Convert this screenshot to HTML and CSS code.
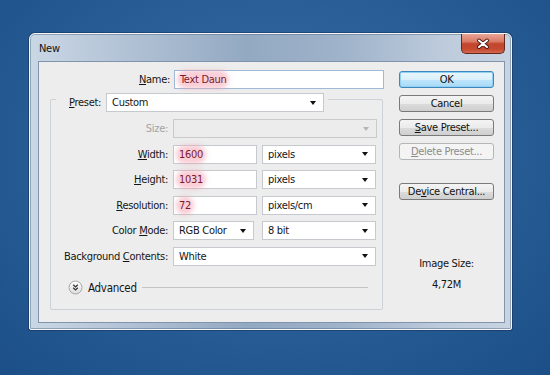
FILE: index.html
```html
<!DOCTYPE html>
<html lang="en">
<head>
  <meta charset="UTF-8">
  <title>New</title>
  <link rel="stylesheet" href="styles.css">
</head>
<body>

<div class="window">
  <div class="titlebar">
    <span class="title">New</span>
    <div class="close">
      <svg width="42" height="19" viewBox="0 0 42 19">
        <path d="M17 6.5 L25 13 M25 6.5 L17 13" stroke="#4a1c14" stroke-width="4" stroke-linecap="round"/>
        <path d="M17 6.5 L25 13 M25 6.5 L17 13" stroke="#fff" stroke-width="2" stroke-linecap="round"/>
      </svg>
    </div>
  </div>

  <div class="client">
    <div class="form">
      <div class="row">
        <label class="lbl name-lbl"><u>N</u>ame:</label>
        <div class="field text focus w-name"><span class="hl">Text Daun</span></div>
      </div>

      <div class="group">
        <div class="legend">
          <label><u>P</u>reset:</label>
          <div class="field select w-preset"><span>Custom</span><i class="arrow"></i></div>
        </div>

        <div class="row first disabled">
          <label class="lbl">Size:</label>
          <div class="field select w-full"><span></span><i class="arrow"></i></div>
        </div>
        <div class="row">
          <label class="lbl"><u>W</u>idth:</label>
          <div class="field text w-num"><span class="hl">1600</span></div>
          <div class="field select w-unit gap"><span>pixels</span><i class="arrow"></i></div>
        </div>
        <div class="row">
          <label class="lbl"><u>H</u>eight:</label>
          <div class="field text w-num"><span class="hl">1031</span></div>
          <div class="field select w-unit gap"><span>pixels</span><i class="arrow"></i></div>
        </div>
        <div class="row">
          <label class="lbl"><u>R</u>esolution:</label>
          <div class="field text w-num"><span class="hl">72</span></div>
          <div class="field select w-unit gap"><span>pixels/cm</span><i class="arrow"></i></div>
        </div>
        <div class="row">
          <label class="lbl">Color <u>M</u>ode:</label>
          <div class="field select w-mode"><span>RGB Color</span><i class="arrow"></i></div>
          <div class="field select w-unit gap-wide"><span>8 bit</span><i class="arrow"></i></div>
        </div>
        <div class="row">
          <label class="lbl">Background <u>C</u>ontents:</label>
          <div class="field select w-bg"><span>White</span><i class="arrow"></i></div>
        </div>

        <div class="advanced">
          <svg width="15" height="15" viewBox="0 0 15 15">
            <defs>
              <linearGradient id="adv" x1="0" y1="0" x2="0" y2="1">
                <stop offset="0" stop-color="#ffffff"/>
                <stop offset="1" stop-color="#dcdcdc"/>
              </linearGradient>
            </defs>
            <circle cx="7.5" cy="7.5" r="6.5" fill="url(#adv)" stroke="#a9a9a9"/>
            <path d="M5.2 4.8 L7.5 6.9 L9.8 4.8 M5.2 7.8 L7.5 9.9 L9.8 7.8" fill="none" stroke="#333" stroke-width="1.3"/>
          </svg>
          <span>Advanced</span>
          <div class="rule"></div>
        </div>
      </div>
    </div>

    <div class="side">
      <div class="btn default">OK</div>
      <div class="btn">Cancel</div>
      <div class="btn"><u>S</u>ave Preset...</div>
      <div class="btn off"><u>D</u>elete Preset...</div>
      <div class="btn spaced">De<u>v</u>ice Central...</div>
      <div class="image-size">
        <div>Image Size:</div>
        <div>4,72M</div>
      </div>
    </div>
  </div>
</div>

</body>
</html>
```

FILE: styles.css
```css
body {
  margin: 0;
  width: 550px;
  height: 375px;
  box-sizing: border-box;
  padding: 33px 0 0 29px;
  overflow: hidden;
  background: radial-gradient(ellipse 75% 85% at 50% 40%, #3369a0 0%, #2a5f97 45%, #1b4e86 100%);
  font-family: "DejaVu Sans Condensed", "DejaVu Sans", sans-serif;
  font-stretch: condensed;
  font-size: 11px;
  letter-spacing: -0.3px;
  color: #151515;
}
u {
  text-decoration: underline;
  text-underline-offset: 1px;
}
.window {
  width: 483px;
  height: 297px;
  box-sizing: border-box;
  display: flex;
  flex-direction: column;
  border: 1px solid #f4f6f9;
  border-radius: 6px 6px 2px 2px;
  background: linear-gradient(90deg, #cad7e5 0%, #b2c2d5 20%, #93a9c2 45%, #9fb3ca 65%, #bccadb 85%, #c8d4e2 100%);
  box-shadow: 0 0 0 1px rgba(10,30,60,0.35), inset 0 0 0 1px rgba(80,100,125,0.45);
}
.titlebar {
  height: 27px;
  display: flex;
  justify-content: space-between;
  align-items: flex-start;
  padding-left: 9px;
}
.title {
  line-height: 29px;
  color: #111;
}
.close {
  width: 42px;
  height: 19px;
  margin-right: 6px;
  border: 1px solid #62281e;
  border-top: none;
  border-radius: 0 0 5px 5px;
  background: linear-gradient(#e8a597 0%, #da7a66 40%, #c2452d 52%, #c54a30 80%, #d46a50 100%);
  display: flex;
  align-items: center;
  justify-content: center;
}
.close svg {
  display: block;
}
.client {
  flex: 1;
  display: flex;
  margin: 0 6px 6px 8px;
  padding: 8px 10px 0 0;
  border: 1px solid #8194ab;
  background: #ededed;
}
.form {
  width: 345px;
}
.row {
  display: flex;
  align-items: center;
  height: 19px;
  margin-top: 6.5px;
}
.form > .row {
  margin-top: 0;
}
.lbl {
  width: 117px;
  margin-right: 5px;
  text-align: right;
  white-space: nowrap;
}
.name-lbl {
  width: 131px;
  margin-right: 4px;
}
.disabled .lbl {
  color: #a3a3a3;
}
.field {
  height: 19px;
  box-sizing: border-box;
  display: flex;
  align-items: center;
  padding: 0 7px 0 5px;
  background: #fff;
  border: 1px solid #c6cacf;
}
.field.text.focus {
  border-color: #9fbad6;
}
.select {
  justify-content: space-between;
}
.disabled .field {
  background: #ececec;
  border-color: #cacaca;
}
.disabled .arrow {
  border-top-color: #b5b5b5;
}
.arrow {
  width: 0;
  height: 0;
  border-left: 3.5px solid transparent;
  border-right: 3.5px solid transparent;
  border-top: 4px solid #111;
}
.hl {
  color: #7c1a2c;
  background: rgba(246, 160, 178, 0.5);
  box-shadow: 0 0 4px 3px rgba(246, 160, 178, 0.5);
  border-radius: 6px;
}
.w-name { width: 210px; }
.w-preset { width: 218px; }
.w-full { width: 204px; }
.w-num { width: 84px; }
.w-unit { width: 114px; }
.w-mode { width: 81px; }
.w-bg { width: 203px; }
.gap { margin-left: 5px; }
.gap-wide { margin-left: 8px; }
.group {
  width: 333px;
  box-sizing: border-box;
  margin: 10px 0 0 11px;
  padding-bottom: 13px;
  border: 1px solid #cdd2d8;
  border-radius: 2px;
}
.legend {
  width: fit-content;
  display: flex;
  align-items: center;
  gap: 5px;
  margin: -7px 0 0 5px;
  padding: 0 4px 0 13px;
  background: #ededed;
}
.row.first {
  margin-top: 7px;
}
.advanced {
  height: 16px;
  display: flex;
  align-items: center;
  gap: 5px;
  margin-top: 14px;
  padding: 0 14px 0 17px;
}
.advanced span {
  font-size: 11.5px;
}
.advanced svg {
  display: block;
}
.rule {
  flex: 1;
  height: 1px;
  background: #c4c4c4;
}
.side {
  width: 95px;
  margin-left: 15px;
  padding-top: 1px;
  display: flex;
  flex-direction: column;
}
.btn {
  height: 17px;
  box-sizing: border-box;
  margin-bottom: 7px;
  border: 1px solid #7a7a7a;
  border-radius: 3px;
  background: linear-gradient(#f4f4f4 0%, #ebebeb 50%, #dcdcdc 51%, #cfcfcf 100%);
  text-align: center;
  line-height: 15px;
  color: #111;
}
.btn.default {
  border-color: #3c87bd;
  background: linear-gradient(#eaf6fd 0%, #d9f0fc 50%, #bee6fd 51%, #a7d9f5 100%);
  box-shadow: inset 0 0 0 1px #8fd0f3;
}
.btn.off {
  border-color: #b3b6b9;
  background: #f4f4f4;
  color: #8b8b8b;
}
.btn.spaced {
  margin-top: 16px;
}
.image-size {
  margin-top: 46px;
  text-align: center;
  line-height: 21px;
}
```
